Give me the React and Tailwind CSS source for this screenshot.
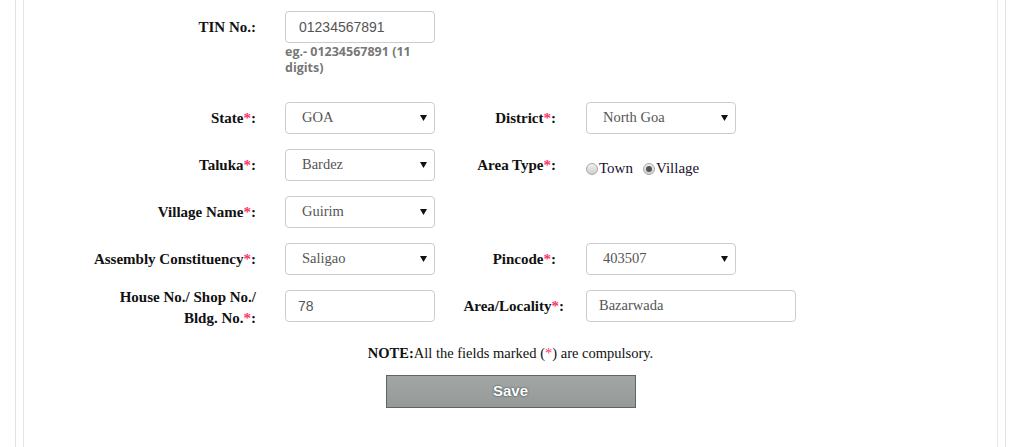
import React from "react";

const serif = "font-['Liberation_Serif',serif]";

function Label({ children, w = "w-[232px]", star = true, className = "" }) {
  return (
    <div className={`${w} shrink-0 text-right ${serif} font-bold text-[15px] text-[#111] leading-[21px] ${className}`}>
      {children}
      {star && <span className="text-[#ff3366]">*</span>}:
    </div>
  );
}

function Arrow() {
  return (
    <svg width="7" height="6" viewBox="0 0 7 6" className="shrink-0">
      <path d="M0 0 H7 L3.5 6 Z" fill="#111" />
    </svg>
  );
}

function Select({ value, w = "w-[150px]" }) {
  return (
    <div className={`${w} h-[32px] shrink-0 border border-[#cccccc] rounded-[4px] bg-white flex items-center justify-between pl-[16px] pr-[7px]`}>
      <span className={`${serif} text-[14.5px] text-[#555]`}>{value}</span>
      <Arrow />
    </div>
  );
}

function Input({ value, w = "w-[150px]", font = serif, pl = "pl-[12px]", size = "text-[14.5px]" }) {
  return (
    <div className={`${w} h-[32px] shrink-0 border border-[#cccccc] rounded-[4px] bg-white flex items-center ${pl}`}>
      <span className={`${font} ${size} text-[#555]`}>{value}</span>
    </div>
  );
}

function Radio({ checked, label }) {
  return (
    <span className="flex items-center">
      <span className="w-[12px] h-[12px] rounded-full border border-[#a8a8a8] bg-gradient-to-b from-[#f0f0f0] to-[#cfcfcf] flex items-center justify-center">
        {checked && <span className="w-[6px] h-[6px] rounded-full bg-[#555]" />}
      </span>
      <span className={`${serif} text-[15px] text-[#1a1030] ml-[1px]`}>{label}</span>
    </span>
  );
}

export default function App() {
  return (
    <div className="w-[1021px] h-[447px] overflow-hidden bg-white">
      <div className="ml-[15px] w-[991px] h-[447px] border-x border-[#e2e2e2]">
        <div className="mx-[7px] h-[447px] border-x border-[#e6e6ea]">
          <div className="pt-[11px] flex flex-col">
            {/* TIN */}
            <div className="flex items-start">
              <div className="h-[32px] flex items-center">
                <Label star={false}>TIN No.</Label>
              </div>
              <div className="ml-[29px] flex flex-col">
                <Input value="01234567891" font="font-['Liberation_Sans',sans-serif]" pl="pl-[13px]" size="text-[14px]" />
                <div className="w-[150px] mt-[1px] font-['Open_Sans',sans-serif] font-bold text-[12.5px] leading-[16px] text-[#777]">
                  eg.- 01234567891 (11 digits)
                </div>
              </div>
            </div>

            {/* State / District */}
            <div className="flex items-center mt-[26px]">
              <Label>State</Label>
              <div className="ml-[29px]"><Select value="GOA" /></div>
              <Label w="w-[121px]">District</Label>
              <div className="ml-[30px]"><Select value="North Goa" /></div>
            </div>

            {/* Taluka / Area Type */}
            <div className="flex items-center mt-[15px]">
              <Label>Taluka</Label>
              <div className="ml-[29px]"><Select value="Bardez" /></div>
              <Label w="w-[121px]">Area Type</Label>
              <div className="ml-[30px] flex items-center gap-[10px] pt-[7px]">
                <Radio label="Town" />
                <Radio checked label="Village" />
              </div>
            </div>

            {/* Village */}
            <div className="flex items-center mt-[15px]">
              <Label>Village Name</Label>
              <div className="ml-[29px]"><Select value="Guirim" /></div>
            </div>

            {/* Assembly / Pincode */}
            <div className="flex items-center mt-[15px]">
              <Label>Assembly Constituency</Label>
              <div className="ml-[29px]"><Select value="Saligao" /></div>
              <Label w="w-[121px]">Pincode</Label>
              <div className="ml-[30px]"><Select value="403507" /></div>
            </div>

            {/* House / Area */}
            <div className="flex items-start mt-[15px]">
              <Label className="-mt-[3px]">House No./ Shop No./<br />Bldg. No.</Label>
              <div className="ml-[29px]"><Input value="78" font="font-['Liberation_Sans',sans-serif]" size="text-[14px]" /></div>
              <div className="h-[32px] flex items-center">
                <Label w="w-[129px]">Area/Locality</Label>
              </div>
              <div className="ml-[22px]"><Input value="Bazarwada" w="w-[210px]" /></div>
            </div>

            {/* Note */}
            <div className={`mt-[14px] text-center ${serif} text-[14.5px] leading-[20px] text-[#111]`}>
              <span className="font-bold">NOTE:</span>All the fields marked (<span className="text-[#ff3366]">*</span>) are compulsory.
            </div>

            {/* Save */}
            <div className="flex justify-center mt-[12px]">
              <button className="w-[250px] h-[33px] border border-[#5b6663] bg-gradient-to-b from-[#a2a7a5] to-[#959a98] text-white font-['Liberation_Sans',sans-serif] font-bold text-[15px] [text-shadow:0_0_2px_#1f2e2e]">
                Save
              </button>
            </div>
          </div>
        </div>
      </div>
    </div>
  );
}
